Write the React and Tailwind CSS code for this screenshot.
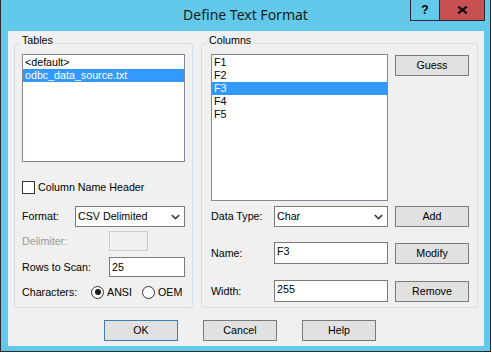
import React from 'react'

const ui = { fontFamily: '"Liberation Sans", Arial, sans-serif' }

function Group({ label, className, children }) {
  return (
    <div className={`relative border border-[#d5dfe5] rounded-[3px] ${className}`}>
      <span className="absolute -top-[10px] left-[5px] px-[2px] bg-[#f0f0f0] leading-[13px] text-black">
        {label}
      </span>
      {children}
    </div>
  )
}

function Chevron() {
  return (
    <svg width="9" height="6" viewBox="0 0 9 6" className="shrink-0">
      <polyline points="0.8,1 4.5,4.6 8.2,1" fill="none" stroke="#3a3a3a" strokeWidth="1.6" />
    </svg>
  )
}

function Select({ value, className }) {
  return (
    <div className={`flex items-center justify-between h-[21px] border border-[#7a7a7a] bg-white pl-[2px] pr-[4px] ${className}`}>
      <span className="leading-[13px]">{value}</span>
      <Chevron />
    </div>
  )
}

function Button({ children, isDefault, className = '' }) {
  return (
    <div
      className={`flex items-center justify-center w-[74px] h-[21px] bg-[#e1e1e1] border ${
        isDefault ? 'border-[#3c7fb1]' : 'border-[#7a7a7a]'
      } leading-[13px] ${className}`}
    >
      {children}
    </div>
  )
}

function Radio({ checked, label }) {
  return (
    <div className="flex items-center">
      <div className="w-[13px] h-[13px] rounded-full border border-[#333] bg-white flex items-center justify-center">
        {checked && <div className="w-[6px] h-[6px] rounded-full bg-[#1a1a1a]" />}
      </div>
      <span className="ml-[3px] leading-[13px]">{label}</span>
    </div>
  )
}

export default function App() {
  return (
    <div className="w-[492px] h-[354px] bg-white overflow-hidden text-[10.7px] text-black" style={ui}>
      <div className="w-[491px] h-[352px] bg-[#63c9ea] border-x border-b border-[#2b2b2b] flex flex-col">
        {/* title bar */}
        <div className="relative h-[31px] flex justify-center pt-[5px]">
          <span
            className="text-[14px] leading-[20px] text-[#1b1b1b]"
            style={{ fontFamily: '"Noto Sans", "Open Sans", sans-serif' }}
          >
            Define Text Format
          </span>
          <div className="absolute right-[5px] top-0 flex h-[21px] border-x border-b border-[#2b2b2b]">
            <div className="w-[28px] flex items-center justify-center font-bold text-[12px] leading-[14px]">?</div>
            <div className="w-[45px] border-l border-[#2b2b2b] bg-[#c75050] flex items-center justify-center">
              <svg width="11" height="8" viewBox="0 0 11 8">
                <path d="M1.2 0.6 L9.8 7.4 M9.8 0.6 L1.2 7.4" stroke="#111" strokeWidth="2.2" />
              </svg>
            </div>
          </div>
        </div>

        {/* client area */}
        <div className="ml-[7px] w-[476px] h-[315px] bg-[#f0f0f0] flex flex-col">
          <div className="flex mt-[12px] ml-[6px] gap-[8px]">
            <Group label="Tables" className="w-[179px] h-[265px] pl-[7px] pt-[10px]">
              <div className="w-[163px] h-[108px] border border-[#828790] bg-white pt-[1px]">
                <div className="h-[13px] leading-[13px] pl-[2px]">&lt;default&gt;</div>
                <div className="h-[13px] leading-[13px] pl-[2px] bg-[#3399ff] text-white">odbc_data_source.txt</div>
              </div>

              <div className="flex items-center mt-[19px] h-[13px]">
                <div className="w-[13px] h-[13px] border border-[#333] bg-white" />
                <span className="ml-[3px] leading-[13px]">Column Name Header</span>
              </div>

              <div className="flex items-center mt-[12px]">
                <span className="w-[53px] leading-[13px]">Format:</span>
                <Select value="CSV Delimited" className="w-[110px]" />
              </div>

              <div className="flex items-center mt-[4px]">
                <span className="w-[87px] leading-[13px] text-[#9a9a9a]">Delimiter:</span>
                <div className="w-[39px] h-[20px] border border-[#cccccc] bg-[#f0f0f0]" />
              </div>

              <div className="flex items-center mt-[6px]">
                <span className="w-[87px] leading-[13px]">Rows to Scan:</span>
                <div className="w-[76px] h-[20px] border border-[#7a7a7a] bg-white pl-[2px] flex items-center leading-[13px]">
                  25
                </div>
              </div>

              <div className="flex items-center mt-[8px] h-[14px]">
                <span className="w-[69px] leading-[13px]">Characters:</span>
                <Radio checked label="ANSI" />
                <div className="ml-[10px]">
                  <Radio label="OEM" />
                </div>
              </div>
            </Group>

            <Group label="Columns" className="w-[277px] h-[265px] pl-[9px] pt-[10px]">
              <div className="flex items-start">
                <div className="w-[177px] h-[147px] border border-[#828790] bg-white pt-[1px]">
                  <div className="h-[13px] leading-[13px] pl-[2px]">F1</div>
                  <div className="h-[13px] leading-[13px] pl-[2px]">F2</div>
                  <div className="h-[13px] leading-[13px] pl-[2px] bg-[#3399ff] text-white">F3</div>
                  <div className="h-[13px] leading-[13px] pl-[2px]">F4</div>
                  <div className="h-[13px] leading-[13px] pl-[2px]">F5</div>
                </div>
                <Button className="ml-[7px] mt-[1px]">Guess</Button>
              </div>

              <div className="flex items-center mt-[5px]">
                <span className="w-[63px] leading-[13px]">Data Type:</span>
                <Select value="Char" className="w-[114px]" />
                <Button className="ml-[7px]">Add</Button>
              </div>

              <div className="flex items-center mt-[15px]">
                <span className="w-[63px] leading-[13px]">Name:</span>
                <div className="w-[114px] h-[22px] border border-[#7a7a7a] bg-white pl-[2px] pt-[2px] leading-[13px]">F3</div>
                <Button className="ml-[7px]">Modify</Button>
              </div>

              <div className="flex items-center mt-[16px]">
                <span className="w-[63px] leading-[13px]">Width:</span>
                <div className="w-[114px] h-[22px] border border-[#7a7a7a] bg-white pl-[2px] pt-[2px] leading-[13px]">255</div>
                <Button className="ml-[7px]">Remove</Button>
              </div>
            </Group>
          </div>

          <div className="flex mt-[12px] ml-[96px] gap-[25px]">
            <Button isDefault>OK</Button>
            <Button>Cancel</Button>
            <Button>Help</Button>
          </div>
        </div>
      </div>
    </div>
  )
}
